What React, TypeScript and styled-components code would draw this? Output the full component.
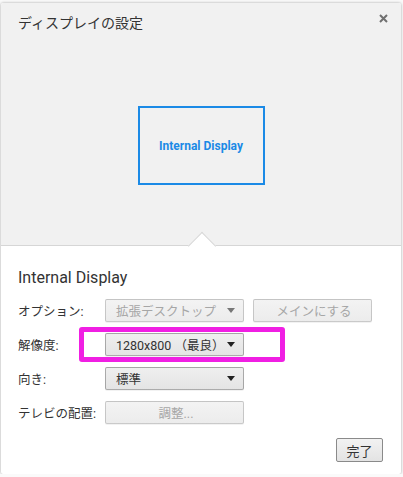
import React from 'react';
import styled, { createGlobalStyle } from 'styled-components';

const GlobalStyle = createGlobalStyle`
  html, body {
    margin: 0;
    padding: 0;
    background: #fafafa;
  }
  body {
    font-family: Roboto, "Noto Sans CJK JP", "Liberation Sans", sans-serif;
    color: #333;
  }
`;

const Dialog = styled.div`
  width: 400px;
  height: 471px;
  margin: 3px 0 0 1px;
  background: #fff;
  box-shadow: 0 0 3px rgba(0, 0, 0, 0.35);
  border-radius: 2px;
  display: flex;
  flex-direction: column;
  overflow: hidden;
`;

const Preview = styled.div`
  position: relative;
  height: 242px;
  background: #f1f1f1;
  border-bottom: 1px solid #d6d6d6;
  display: flex;
  flex-direction: column;
  align-items: center;
  flex-shrink: 0;
`;

const Title = styled.div`
  align-self: stretch;
  padding: 10px 17px 0;
  line-height: 20px;
  font-size: 14px;
  color: #333;
`;

const Close = styled.div`
  position: absolute;
  right: 12px;
  top: 9px;
  width: 12px;
  height: 12px;
  display: flex;
  align-items: center;
  justify-content: center;
`;

const DisplayBox = styled.div`
  margin-top: 73px;
  width: 127px;
  height: 79px;
  box-sizing: border-box;
  border: 2px solid #1b8ae6;
  display: flex;
  align-items: center;
  justify-content: center;
  color: #1b8ae6;
  font-family: Roboto, sans-serif;
  font-weight: 700;
  font-size: 12px;
`;

const Pointer = styled.div`
  position: absolute;
  left: 191px;
  bottom: -11px;
  width: 19px;
  height: 19px;
  background: #fff;
  border-top: 1px solid #d6d6d6;
  border-left: 1px solid #d6d6d6;
  transform: rotate(45deg);
`;

const Body = styled.div`
  flex: 1;
  padding: 22px 17px 0 17px;
  display: flex;
  flex-direction: column;
`;

const Heading = styled.div`
  font-family: Roboto, sans-serif;
  font-size: 16px;
  line-height: 20px;
  color: #333;
`;

const Form = styled.div`
  margin-top: 11px;
  display: grid;
  grid-template-columns: 87px auto;
  grid-auto-rows: 23px;
  row-gap: 11px;
`;

const Label = styled.div`
  font-size: 12.5px;
  display: flex;
  align-items: center;
  color: #333;
`;

const Controls = styled.div`
  display: flex;
  align-items: center;
  gap: 9px;
  position: relative;
`;

const Control = styled.div<{ $width: number; $disabled?: boolean; $center?: boolean }>`
  width: ${p => p.$width}px;
  height: 23px;
  box-sizing: border-box;
  border: 1px solid ${p => (p.$disabled ? 'rgba(0,0,0,0.17)' : 'rgba(0,0,0,0.28)')};
  border-radius: 2px;
  background: ${p =>
    p.$disabled
      ? 'linear-gradient(#f3f3f3, #ececec)'
      : 'linear-gradient(#efefef, #e4e4e4)'};
  box-shadow: 0 1px 0 rgba(0, 0, 0, 0.05);
  display: flex;
  align-items: center;
  justify-content: ${p => (p.$center ? 'center' : 'space-between')};
  padding: 0 7px 0 10px;
  font-size: 12.5px;
  color: ${p => (p.$disabled ? '#a6a6a6' : '#333')};
`;

const Arrow = styled.span<{ $disabled?: boolean }>`
  width: 0;
  height: 0;
  border-left: 4.5px solid transparent;
  border-right: 4.5px solid transparent;
  border-top: 5px solid ${p => (p.$disabled ? '#777' : '#222')};
  margin-right: 1px;
`;

const Highlight = styled.div`
  position: absolute;
  left: -26px;
  top: -6px;
  width: 206px;
  height: 35px;
  box-sizing: border-box;
  border: 5px solid #f01fe3;
  border-radius: 3px;
  pointer-events: none;
`;

const Footer = styled.div`
  margin-top: auto;
  padding: 0 18px 12px 0;
  display: flex;
  justify-content: flex-end;
`;

const DoneButton = styled.div`
  width: 47px;
  height: 24px;
  box-sizing: border-box;
  border: 1px solid #8a8a8a;
  border-radius: 2px;
  background: linear-gradient(#f2f2f2, #e3e3e3);
  display: flex;
  align-items: center;
  justify-content: center;
  font-size: 13px;
  color: #333;
`;

const Select = ({ text, disabled, width = 139 }: { text: string; disabled?: boolean; width?: number }) => (
  <Control $width={width} $disabled={disabled}>
    <span>{text}</span>
    <Arrow $disabled={disabled} />
  </Control>
);

const App = () => (
  <>
    <GlobalStyle />
    <Dialog>
      <Preview>
        <Title>ディスプレイの設定</Title>
        <Close>
          <svg width="9" height="9" viewBox="0 0 9 9">
            <path d="M1 1L8 8M8 1L1 8" stroke="#707070" strokeWidth="2" />
          </svg>
        </Close>
        <DisplayBox>Internal Display</DisplayBox>
        <Pointer />
      </Preview>
      <Body>
        <Heading>Internal Display</Heading>
        <Form>
          <Label>オプション:</Label>
          <Controls>
            <Select text="拡張デスクトップ" disabled />
            <Control $width={119} $disabled $center>メインにする</Control>
          </Controls>
          <Label>解像度:</Label>
          <Controls>
            <Select text="1280x800 （最良）" />
            <Highlight />
          </Controls>
          <Label>向き:</Label>
          <Controls>
            <Select text="標準" />
          </Controls>
          <Label>テレビの配置:</Label>
          <Controls>
            <Control $width={139} $disabled $center>調整...</Control>
          </Controls>
        </Form>
      </Body>
      <Footer>
        <DoneButton>完了</DoneButton>
      </Footer>
    </Dialog>
  </>
);

export default App;
